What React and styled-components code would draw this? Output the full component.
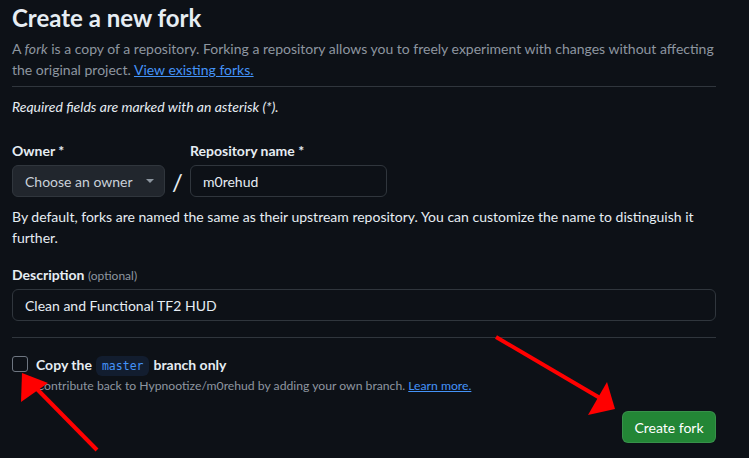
import React from 'react';
import styled, { createGlobalStyle } from 'styled-components';

const GlobalStyle = createGlobalStyle`
  body {
    margin: 0;
    background: #0d1117;
    color: #e6edf3;
    font-family: Lato, "Noto Sans", sans-serif;
    font-size: 14px;
  }
`;

const Page = styled.div`
  position: relative;
  width: 749px;
  height: 458px;
  overflow: hidden;
  padding: 0 33px 0 12px;
  box-sizing: border-box;
`;

const Title = styled.h1`
  margin: 0;
  padding-top: 2px;
  font-size: 24px;
  font-weight: 700;
  line-height: 32px;
`;

const Lead = styled.p`
  margin: 4px 0 0;
  color: #8d96a0;
  line-height: 21px;
  font-size: 14px;
`;

const Link = styled.a`
  color: #4493f8;
  text-decoration: underline;
`;

const Divider = styled.hr`
  border: 0;
  border-top: 1px solid #30363d;
  margin: ${(p) => p.$margin || '8px 0'};
`;

const Note = styled.p`
  margin: 0;
  font-style: italic;
  line-height: 21px;
  font-size: 14px;
`;

const FieldRow = styled.div`
  display: flex;
  align-items: flex-end;
  margin-top: 24px;
`;

const Field = styled.div`
  display: flex;
  flex-direction: column;
`;

const Label = styled.label`
  display: block;
  height: 20px;
  font-weight: 700;
  font-size: 14px;
  line-height: 20px;
  margin-bottom: 4px;
`;

const Optional = styled.span`
  font-weight: 400;
  color: #8d96a0;
  font-size: 12px;
`;

const Select = styled.div`
  width: 153px;
  height: 32px;
  box-sizing: border-box;
  border: 1px solid #30363d;
  border-radius: 6px;
  background: #21262d;
  color: #c9d1d9;
  display: flex;
  align-items: center;
  padding: 0 12px;
  gap: 13px;
  font-size: 14px;
  white-space: nowrap;
`;

const Caret = styled.span`
  width: 0;
  height: 0;
  border-left: 4px solid transparent;
  border-right: 4px solid transparent;
  border-top: 4px solid #8d96a0;
`;

const Slash = styled.span`
  width: 25px;
  height: 32px;
  display: flex;
  align-items: center;
  justify-content: center;
  font-size: 24px;
  color: #e6edf3;
`;

const Input = styled.div`
  width: ${(p) => p.$width || '197px'};
  height: 32px;
  box-sizing: border-box;
  border: 1px solid #30363d;
  border-radius: 6px;
  background: #0d1117;
  display: flex;
  align-items: center;
  padding: 0 12px;
  font-size: 14px;
`;

const Help = styled.p`
  margin: 9px 0 0;
  line-height: 21px;
  font-size: 14px;
`;

const Section = styled.div`
  margin-top: ${(p) => p.$top || '24px'};
  display: flex;
  flex-direction: column;
`;

const CheckRow = styled.div`
  display: flex;
  align-items: flex-start;
  gap: 8px;
  margin-top: 17px;
`;

const Box = styled.span`
  width: 16px;
  height: 16px;
  box-sizing: border-box;
  border: 1px solid #6e7681;
  border-radius: 3px;
  margin-top: 1px;
  flex-shrink: 0;
`;

const CheckText = styled.div`
  display: flex;
  flex-direction: column;
`;

const CheckLabel = styled.span`
  font-weight: 700;
  font-size: 14px;
  line-height: 20px;
`;

const Code = styled.code`
  font-family: "DejaVu Sans Mono", "Liberation Mono", monospace;
  font-size: 11.5px;
  font-weight: 400;
  color: #4493f8;
  background: #121d2f;
  border-radius: 6px;
  padding: 3px 6px;
  margin: 0 4px;
`;

const SubText = styled.span`
  color: #8d96a0;
  font-size: 12.2px;
  line-height: 20px;
`;

const Actions = styled.div`
  display: flex;
  justify-content: flex-end;
  margin-top: 15px;
`;

const Button = styled.button`
  background: #238636;
  color: #ffffff;
  border: 1px solid rgba(240, 246, 252, 0.1);
  border-radius: 6px;
  height: 32px;
  width: 94px;
  font-family: inherit;
  font-size: 14px;
`;

const Overlay = styled.svg`
  position: absolute;
  left: 0;
  top: 0;
  pointer-events: none;
`;

export default function App() {
  return (
    <>
      <GlobalStyle />
      <Page>
        <Title>Create a new fork</Title>
        <Lead>
          A <em>fork</em> is a copy of a repository. Forking a repository allows you to freely
          experiment with changes without affecting the original project.{' '}
          <Link href="#">View existing forks.</Link>
        </Lead>
        <Divider $margin="6px 0 9px" />
        <Note>Required fields are marked with an asterisk (*).</Note>
        <FieldRow>
          <Field>
            <Label>Owner *</Label>
            <Select>
              Choose an owner
              <Caret />
            </Select>
          </Field>
          <Slash>/</Slash>
          <Field>
            <Label>Repository name *</Label>
            <Input>m0rehud</Input>
          </Field>
        </FieldRow>
        <Help>
          By default, forks are named the same as their upstream repository. You can customize the
          name to distinguish it further.
        </Help>
        <Section $top="17px">
          <Label>
            Description <Optional>(optional)</Optional>
          </Label>
          <Input $width="100%">Clean and Functional TF2 HUD</Input>
        </Section>
        <Divider $margin="16px 0 0" />
        <CheckRow>
          <Box />
          <CheckText>
            <CheckLabel>
              Copy the<Code>master</Code>branch only
            </CheckLabel>
            <SubText>
              Contribute back to Hypnootize/m0rehud by adding your own branch.{' '}
              <Link href="#">Learn more.</Link>
            </SubText>
          </CheckText>
        </CheckRow>
        <Actions>
          <Button>Create fork</Button>
        </Actions>
        <Overlay width="749" height="458">
          <line x1="496" y1="337" x2="600" y2="398" stroke="#ff0000" strokeWidth="4" />
          <polygon points="615,409 607,382 588,415" fill="#ff0000" />
          <line x1="97" y1="450" x2="33" y2="385" stroke="#ff0000" strokeWidth="4" />
          <polygon points="22,373 21,402 48,383" fill="#ff0000" />
        </Overlay>
      </Page>
    </>
  );
}
